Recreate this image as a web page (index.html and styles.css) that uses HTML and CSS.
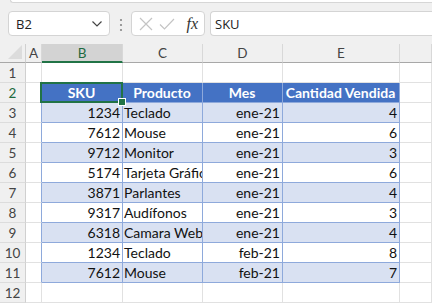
FILE: index.html
```html
<!DOCTYPE html>
<html lang="es">
<head>
    <meta charset="UTF-8">
    <title>Libro1 - Excel</title>
    <link rel="stylesheet" href="styles.css">
</head>
<body>
    <div class="ribbon-edge"></div>

    <div class="formula-bar">
        <div class="name-box">
            <span>B2</span>
            <svg width="12" height="8" viewBox="0 0 12 8"><path d="M1.5 1.5 L6 6 L10.5 1.5" fill="none" stroke="#444" stroke-width="1.2"/></svg>
        </div>
        <div class="grip">
            <svg width="4" height="14" viewBox="0 0 4 14"><circle cx="2" cy="2" r="1.1" fill="#888"/><circle cx="2" cy="7" r="1.1" fill="#888"/><circle cx="2" cy="12" r="1.1" fill="#888"/></svg>
        </div>
        <div class="fx-box">
            <svg width="14" height="14" viewBox="0 0 14 14"><path d="M1 1 L13 13 M13 1 L1 13" stroke="#c4c4c4" stroke-width="1.2"/></svg>
            <svg width="16" height="14" viewBox="0 0 16 14"><path d="M1 7.5 L5.5 12 L15 2" fill="none" stroke="#c4c4c4" stroke-width="1.2"/></svg>
            <span class="fx">fx</span>
        </div>
        <div class="formula-input">SKU</div>
    </div>

    <div class="sheet">
        <div class="corner"><svg width="14" height="14" viewBox="0 0 14 14"><path d="M14 0 L14 14 L0 14 Z" fill="#dcdcdc"/></svg></div>
        <div class="col-head">A</div>
        <div class="col-head active">B</div>
        <div class="col-head">C</div>
        <div class="col-head">D</div>
        <div class="col-head">E</div>
        <div class="col-head"></div>

        <div class="row-head">1</div>
        <div class="cell"></div><div class="cell"></div><div class="cell"></div><div class="cell"></div><div class="cell"></div><div class="cell"></div>

        <div class="row-head active">2</div>
        <div class="cell edge"></div>
        <div class="cell th selected">SKU</div>
        <div class="cell th">Producto</div>
        <div class="cell th">Mes</div>
        <div class="cell th">Cantidad Vendida</div>
        <div class="cell"></div>

        <div class="row-head">3</div>
        <div class="cell edge"></div>
        <div class="cell t band num">1234</div><div class="cell t band">Teclado</div><div class="cell t band num">ene-21</div><div class="cell t band num">4</div>
        <div class="cell"></div>

        <div class="row-head">4</div>
        <div class="cell edge"></div>
        <div class="cell t num">7612</div><div class="cell t">Mouse</div><div class="cell t num">ene-21</div><div class="cell t num">6</div>
        <div class="cell"></div>

        <div class="row-head">5</div>
        <div class="cell edge"></div>
        <div class="cell t band num">9712</div><div class="cell t band">Monitor</div><div class="cell t band num">ene-21</div><div class="cell t band num">3</div>
        <div class="cell"></div>

        <div class="row-head">6</div>
        <div class="cell edge"></div>
        <div class="cell t num">5174</div><div class="cell t">Tarjeta Gráfica</div><div class="cell t num">ene-21</div><div class="cell t num">6</div>
        <div class="cell"></div>

        <div class="row-head">7</div>
        <div class="cell edge"></div>
        <div class="cell t band num">3871</div><div class="cell t band">Parlantes</div><div class="cell t band num">ene-21</div><div class="cell t band num">4</div>
        <div class="cell"></div>

        <div class="row-head">8</div>
        <div class="cell edge"></div>
        <div class="cell t num">9317</div><div class="cell t">Audífonos</div><div class="cell t num">ene-21</div><div class="cell t num">3</div>
        <div class="cell"></div>

        <div class="row-head">9</div>
        <div class="cell edge"></div>
        <div class="cell t band num">6318</div><div class="cell t band">Camara Web</div><div class="cell t band num">ene-21</div><div class="cell t band num">4</div>
        <div class="cell"></div>

        <div class="row-head">10</div>
        <div class="cell edge"></div>
        <div class="cell t num">1234</div><div class="cell t">Teclado</div><div class="cell t num">feb-21</div><div class="cell t num">8</div>
        <div class="cell"></div>

        <div class="row-head">11</div>
        <div class="cell edge"></div>
        <div class="cell t band num">7612</div><div class="cell t band">Mouse</div><div class="cell t band num">feb-21</div><div class="cell t band num">7</div>
        <div class="cell"></div>

        <div class="row-head">12</div>
        <div class="cell"></div><div class="cell"></div><div class="cell"></div><div class="cell"></div><div class="cell"></div><div class="cell"></div>
    </div>
</body>
</html>
```

FILE: styles.css
```css
/* General Styles */
* {
    margin: 0;
    padding: 0;
    box-sizing: border-box;
}

body {
    background-color: #f0f0f0;
    font-family: "Lato", "Open Sans", sans-serif;
    width: 432px;
    height: 303px;
    overflow: hidden;
}

/* Bottom of the ribbon */
.ribbon-edge {
    height: 3px;
    margin-left: 10px;
    background-color: #ffffff;
    border-bottom: 1px solid #d6d6d6;
    border-left: 1px solid #d6d6d6;
    border-bottom-left-radius: 4px;
}

/* Formula bar */
.formula-bar {
    display: flex;
    align-items: center;
    height: 25px;
    margin: 8px 0 8px 8px;
}

.name-box {
    width: 102px;
    height: 25px;
    display: flex;
    align-items: center;
    justify-content: space-between;
    padding: 0 6px 0 7px;
    background-color: #ffffff;
    border: 1px solid #d4d4d4;
    border-radius: 4px;
    font-family: "Open Sans", sans-serif;
    font-size: 13px;
    color: #222;
}

.grip {
    width: 21px;
    display: flex;
    justify-content: center;
    padding-top: 2px;
}

.fx-box {
    width: 74px;
    height: 25px;
    display: flex;
    align-items: center;
    gap: 6px;
    padding: 0 6px 0 7px;
    background-color: #ffffff;
    border: 1px solid #d4d4d4;
    border-radius: 4px;
}

.fx {
    margin-left: auto;
    font-family: "Liberation Serif", serif;
    font-style: italic;
    font-size: 16px;
    color: #333;
}

.formula-input {
    flex: 1;
    height: 25px;
    margin-left: 5px;
    padding-left: 4px;
    display: flex;
    align-items: center;
    background-color: #ffffff;
    border-top: 1px solid #d4d4d4;
    border-bottom: 1px solid #d4d4d4;
    border-left: 1px solid #d4d4d4;
    border-radius: 4px 0 0 4px;
    font-family: "Open Sans", sans-serif;
    font-size: 13px;
    color: #222;
}

/* Sheet grid */
.sheet {
    display: grid;
    grid-template-columns: 26px 16px 81px 80px 80px 117px 1fr;
    grid-template-rows: 19px repeat(12, 20px);
    background-color: #ffffff;
    font-size: 14px;
    line-height: 20px;
}

.corner {
    background-color: #f0f0f0;
    border-right: 1px solid #d0d0d0;
    border-bottom: 1px solid #a8a8a8;
    display: flex;
    align-items: flex-end;
    justify-content: flex-end;
    padding: 0 3px 3px 0;
}

.col-head {
    background-color: #f0f0f0;
    border-right: 1px solid #d8d8d8;
    border-bottom: 1px solid #a8a8a8;
    text-align: center;
    color: #444;
    font-size: 13.5px;
    line-height: 19px;
}

.col-head.active {
    background-color: #d3d3d3;
    color: #1e6b41;
    border-bottom: 2px solid #217346;
}

.row-head {
    background-color: #f0f0f0;
    border-right: 1px solid #d0d0d0;
    border-bottom: 1px solid #dcdcdc;
    text-align: center;
    color: #444;
    font-size: 13.5px;
}

.row-head.active {
    color: #1e6b41;
}

.cell {
    border-right: 1px solid #e1e1e1;
    border-bottom: 1px solid #e1e1e1;
    padding: 0 2px 0 1px;
    white-space: nowrap;
    overflow: hidden;
    color: #111;
}

.cell.edge {
    border-right-color: #8ea9db;
}

.cell.t {
    border-right-color: #8ea9db;
    border-bottom-color: #8ea9db;
}

.cell.band {
    background-color: #d9e1f2;
}

.cell.num {
    text-align: right;
}

.cell.th {
    background-color: #4472c4;
    border-right: 1px solid #8ea9db;
    border-bottom: 1px solid #8ea9db;
    color: #ffffff;
    font-weight: bold;
    text-align: center;
}

/* Active cell */
.cell.selected {
    position: relative;
    overflow: visible;
}

.cell.selected::before {
    content: '';
    position: absolute;
    top: -1px;
    left: -2px;
    right: -1px;
    bottom: -1px;
    border: 2px solid #217346;
}

.cell.selected::after {
    content: '';
    position: absolute;
    right: -4px;
    bottom: -4px;
    width: 6px;
    height: 6px;
    background-color: #217346;
    border: 1px solid #ffffff;
}
```
